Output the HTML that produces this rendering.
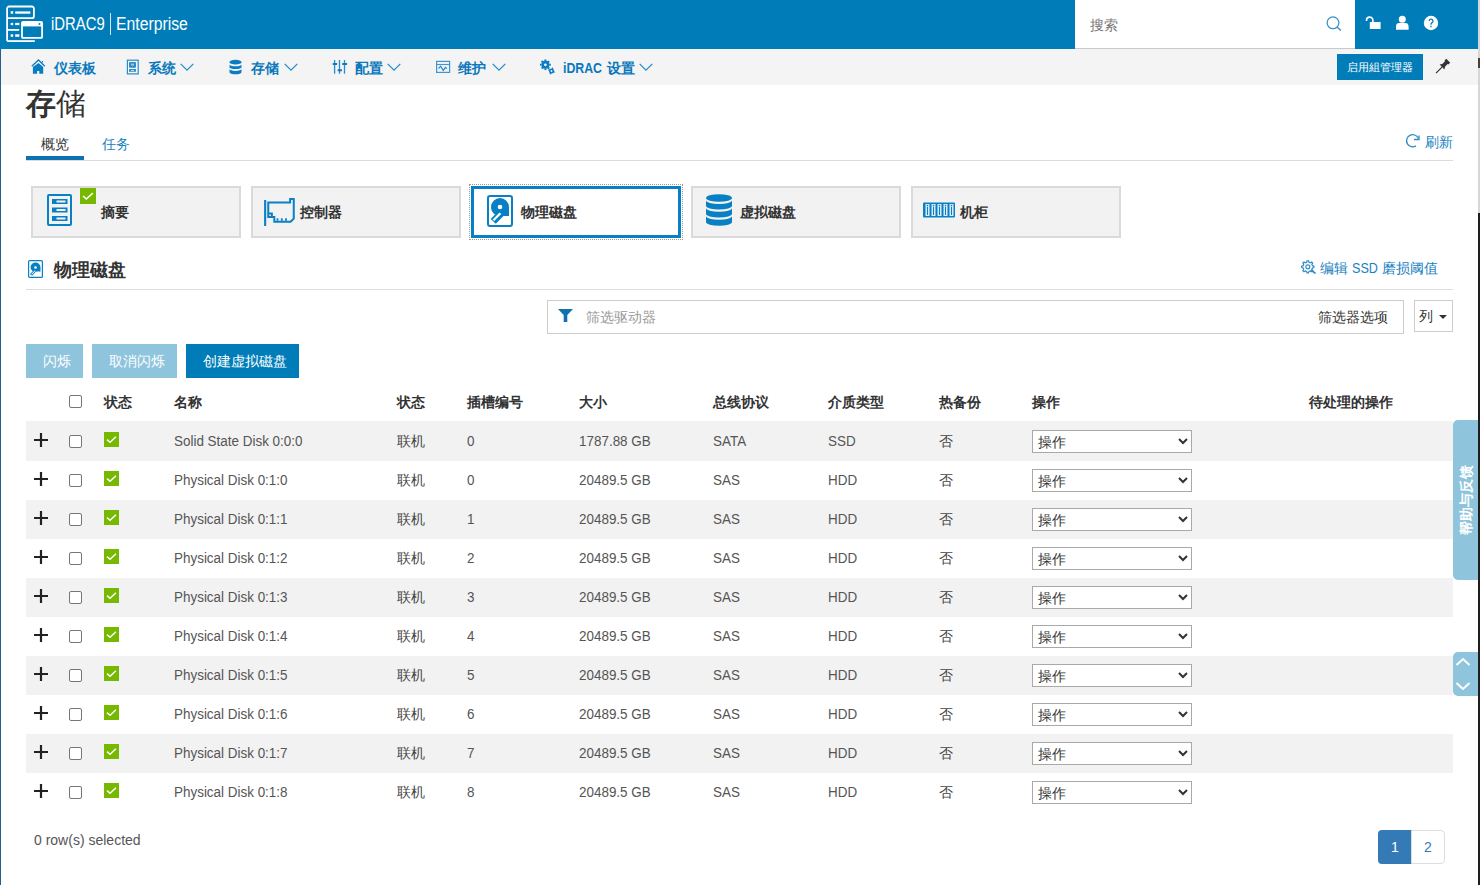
<!DOCTYPE html>
<html><head><meta charset="utf-8"><style>
*{box-sizing:border-box;margin:0;padding:0}
html,body{width:1480px;height:885px;overflow:hidden;background:#fff;font-family:"Liberation Sans",sans-serif;color:#333;position:relative}
.a{position:absolute;white-space:nowrap}
.nv{font-size:14px;font-weight:bold;color:#0b78bc;line-height:16px}
.tile{top:186px;width:210px;height:52px;background:#f2f2f2;border:2px solid #dadada}
.tt{font-size:14px;font-weight:bold;color:#333;line-height:16px}
.th{top:394px;font-size:14px;font-weight:bold;color:#333;line-height:16px}
.row{left:26px;width:1427px;height:39px}
.td{font-size:14px;color:#555;line-height:16px}
.sx{display:inline-block;transform-origin:0 0}
.cb{width:13px;height:13px;border:1px solid #767676;border-radius:2px;background:#fff}
.sel{width:160px;height:23px;border:1px solid #a9a9a9;background:#fff}
.btn{top:344px;height:34px;color:#fff;font-size:14px;line-height:34px;text-align:center;padding-left:4px}
</style></head><body>
<div class="a" style="left:0;top:0;width:1480px;height:49px;background:#007db8"></div>
<svg class="a" style="left:0;top:0" width="48" height="48" viewBox="0 0 48 48"><g fill="none" stroke="#fff" stroke-width="1.8">
<path d="M7.1 41.1 V8.5 a2 2 0 0 1 2 -2 H31.9 a2 2 0 0 1 2 2 V16.2 a2 2 0 0 1 -2 2 H7.1"/>
<path d="M7.1 29.9 H19.2"/><path d="M7.1 41.1 H34.8"/>
<rect x="22" y="22" width="20.1" height="15.9" rx="1"/></g>
<g fill="#fff"><rect x="10.7" y="11.2" width="2.5" height="2.5"/><rect x="15.2" y="11.4" width="15.1" height="2.3"/>
<rect x="10.7" y="22.9" width="2.5" height="2.2"/><rect x="15.2" y="22.9" width="4.2" height="2.2"/>
<rect x="10.7" y="34.3" width="2.5" height="2.5"/><rect x="15.2" y="34.3" width="4.2" height="2.5"/>
<rect x="22" y="22" width="20.1" height="4.4"/></g><circle cx="39.5" cy="23.9" r="1" fill="#007db8"/></svg>
<div class="a" style="left:51px;top:14px;font-size:17.5px;color:#fff;line-height:20px"><span class="sx" style="transform:scaleX(0.85)">iDRAC9</span></div>
<div class="a" style="left:110px;top:13px;width:1px;height:22px;background:#d8e9f3"></div>
<div class="a" style="left:116px;top:14px;font-size:17.5px;color:#fff;line-height:20px"><span class="sx" style="transform:scaleX(0.9)">Enterprise</span></div>
<div class="a" style="left:1075px;top:0;width:280px;height:48px;background:#fff"></div>
<div class="a" style="left:1075px;top:48px;width:280px;height:1px;background:#c9c9c9"></div>
<div class="a" style="left:1090px;top:17px;font-size:14px;color:#777;line-height:16px">搜索</div>
<svg class="a" style="left:1326px;top:16px" width="16" height="16" viewBox="0 0 16 16"><circle cx="7" cy="6.8" r="5.9" fill="none" stroke="#3a92c7" stroke-width="1.3"/><path d="M11.2 11 L14.8 14.6" stroke="#3a92c7" stroke-width="1.4"/></svg>
<svg class="a" style="left:1364px;top:15px" width="18" height="16" viewBox="0 0 18 16"><path d="M2.5 6 V5.3 a3.2 3.2 0 0 1 6.4 0 V7.5" fill="none" stroke="#fff" stroke-width="1.6"/><rect x="5.8" y="7" width="10.8" height="7" fill="#fff"/></svg>
<svg class="a" style="left:1395px;top:15px" width="14" height="16" viewBox="0 0 14 16"><circle cx="7.3" cy="4.3" r="3.5" fill="#fff"/><path d="M1 14.8 V11.5 a3.4 3.4 0 0 1 3.4 -3.4 h5.8 a3.4 3.4 0 0 1 3.4 3.4 V14.8 Z" fill="#fff"/></svg>
<svg class="a" style="left:1423px;top:15px" width="16" height="16" viewBox="0 0 16 16"><circle cx="8" cy="8" r="7.2" fill="#fff"/><path d="M6.2 6 a1.9 1.9 0 1 1 2.6 1.8 c-0.6 0.3 -0.8 0.7 -0.8 1.4 V9.8" fill="none" stroke="#007db8" stroke-width="1.3"/><rect x="7.3" y="10.8" width="1.4" height="1.4" fill="#007db8"/></svg>
<div class="a" style="left:0;top:49px;width:1478px;height:36px;background:#f4f4f4"></div>
<svg class="a" style="left:30px;top:58px" width="16" height="17" viewBox="0 0 16 17"><path d="M1.8 8.3 L8.5 2 L14.8 8.3" fill="none" stroke="#0a7cc1" stroke-width="1.3"/><path d="M12 3 H13 V5 L12 4Z" fill="#0a7cc1"/><path d="M2.9 9 L8.5 5 L13.2 9 V15.8 H9.3 V13 H7.1 V15.8 H2.9 Z" fill="#0a7cc1"/></svg>
<div class="a nv" style="left:54px;top:60px">仪表板</div>
<svg class="a" style="left:126px;top:59px" width="13" height="16" viewBox="0 0 13 16"><rect x="1.4" y="1.2" width="10.8" height="13.7" fill="none" stroke="#2a8ccb" stroke-width="1.2"/><rect x="3" y="3" width="7" height="5.7" rx="1" fill="#2a8ccb"/><rect x="5" y="4.6" width="3" height="2" fill="#9cc9e6"/><rect x="3" y="10.1" width="7" height="2.7" rx="0.5" fill="#2a8ccb"/><rect x="5" y="11" width="3" height="0.9" fill="#cfe5f3"/></svg>
<div class="a nv" style="left:148px;top:60px">系统</div>
<svg class="a" style="left:229px;top:59px" width="13" height="16" viewBox="0 0 13 16"><g fill="#0a7cc1"><path d="M0.5 2.8 a6 2 0 0 1 12 0 V3.6 a6 1.8 0 0 1 -12 0Z"/><path d="M0.5 5.5 a6 1.8 0 0 0 12 0 V8.2 a6 1.8 0 0 1 -12 0Z"/><path d="M0.5 10.1 a6 1.8 0 0 0 12 0 V13.3 a6 2 0 0 1 -12 0Z"/></g></svg>
<div class="a nv" style="left:251px;top:60px">存储</div>
<svg class="a" style="left:332px;top:59px" width="16" height="16" viewBox="0 0 16 16"><g stroke="#2a8ccb" stroke-width="1.3"><path d="M2.6 1 V14.7 M7.5 1 V14.7 M12.5 1 V14.7"/></g><g fill="#0a7cc1"><rect x="0.7" y="4" width="4.4" height="2" rx="0.5"/><rect x="5.6" y="10.2" width="4.4" height="2.1" rx="0.5"/><rect x="10.2" y="4" width="4.9" height="2" rx="0.5"/></g></svg>
<div class="a nv" style="left:355px;top:60px">配置</div>
<svg class="a" style="left:435px;top:60px" width="16" height="14" viewBox="0 0 16 14"><rect x="1.6" y="1.4" width="13" height="11" fill="none" stroke="#3b97d3" stroke-width="1.2"/><path d="M1.6 4.5 H14.6" stroke="#3b97d3" stroke-width="1.1"/><path d="M3.5 8.6 L5.6 6.2 L8.3 10.4 L10.4 7.3 L12 8.6" fill="none" stroke="#2a85c6" stroke-width="1.2"/></svg>
<div class="a nv" style="left:458px;top:60px">维护</div>
<svg class="a" style="left:539px;top:59px" width="17" height="16" viewBox="0 0 17 16"><g fill="#0a7cc1"><circle cx="6.4" cy="5.8" r="4"/><path d="M5.4 0.6 h2 v1.5 h-2Z M5.4 9.5 h2 v1.5 h-2Z M1 4.8 v2 h1.5 v-2Z M10.3 4.8 v2 h1.5 v-2Z" /><g transform="rotate(45 6.4 5.8)"><path d="M5.4 0.6 h2 v1.5 h-2Z M5.4 9.5 h2 v1.5 h-2Z M1 4.8 v2 h1.5 v-2Z M10.3 4.8 v2 h1.5 v-2Z"/></g><circle cx="12.5" cy="12" r="2.5"/><g transform="rotate(22 12.5 12)"><path d="M11.8 8.6 h1.4 v1.2 h-1.4Z M11.8 14.2 h1.4 v1.2 h-1.4Z M9.1 11.3 v1.4 h1.2 v-1.4Z M14.7 11.3 v1.4 h1.2 v-1.4Z"/></g></g><circle cx="6.4" cy="5.8" r="1.4" fill="#f3f3f3"/><circle cx="12.5" cy="12" r="0.9" fill="#f3f3f3"/></svg>
<div class="a nv" style="left:563px;top:60px"><span class="sx" style="transform:scaleX(0.88);width:44px">iDRAC</span>设置</div>
<svg class="a" style="left:180px;top:63px" width="14" height="9" viewBox="0 0 14 9"><path d="M0.7 0.9 L7 7.2 L13.3 0.9" fill="none" stroke="#2a8ccb" stroke-width="1.3"/></svg>
<svg class="a" style="left:284px;top:63px" width="14" height="9" viewBox="0 0 14 9"><path d="M0.7 0.9 L7 7.2 L13.3 0.9" fill="none" stroke="#2a8ccb" stroke-width="1.3"/></svg>
<svg class="a" style="left:387px;top:63px" width="14" height="9" viewBox="0 0 14 9"><path d="M0.7 0.9 L7 7.2 L13.3 0.9" fill="none" stroke="#2a8ccb" stroke-width="1.3"/></svg>
<svg class="a" style="left:492px;top:63px" width="14" height="9" viewBox="0 0 14 9"><path d="M0.7 0.9 L7 7.2 L13.3 0.9" fill="none" stroke="#2a8ccb" stroke-width="1.3"/></svg>
<svg class="a" style="left:639px;top:63px" width="14" height="9" viewBox="0 0 14 9"><path d="M0.7 0.9 L7 7.2 L13.3 0.9" fill="none" stroke="#2a8ccb" stroke-width="1.3"/></svg>
<div class="a" style="left:1337px;top:54px;width:86px;height:26px;background:#007db8;color:#fff;font-size:11px;line-height:26px;text-align:center">启用組管理器</div>
<svg class="a" style="left:1435px;top:58px" width="16" height="16" viewBox="0 0 16 16"><path d="M1 15.2 L7 9.2" stroke="#333" stroke-width="1.2"/><path d="M4.6 6.6 L9.4 11.4 L10 8.7 L12.6 6 L13.3 6.5 L15.2 4.7 L11.3 0.8 L9.5 2.6 L10 3.3 L7.3 6Z" fill="#333"/></svg>
<div class="a" style="left:26px;top:87px;font-size:29.5px;color:#333;line-height:33px"><span style="font-weight:bold">存</span>储</div>
<div class="a" style="left:41px;top:136px;font-size:14px;color:#333;line-height:16px">概览</div>
<div class="a" style="left:102px;top:136px;font-size:14px;color:#1a82c0;line-height:16px">任务</div>
<div class="a" style="left:26px;top:160px;width:1427px;height:1px;background:#dcdcdc"></div>
<div class="a" style="left:26px;top:156px;width:58px;height:4px;background:#0e72b0"></div>
<svg class="a" style="left:1405px;top:133px" width="16" height="16" viewBox="0 0 16 16"><path d="M13.2 5.2 A6.1 6.1 0 1 0 11 12.9" fill="none" stroke="#2f8bc6" stroke-width="1.3"/><path d="M9 6.5 H14 V2.4" fill="none" stroke="#2f8bc6" stroke-width="1.3"/></svg>
<div class="a" style="left:1425px;top:134px;font-size:14px;color:#1a82c0;line-height:16px">刷新</div>
<div class="a tile" style="left:31px"></div>
<div class="a tile" style="left:251px"></div>
<div class="a tile" style="left:691px"></div>
<div class="a tile" style="left:911px"></div>
<div class="a" style="left:469px;top:184px;width:214px;height:56px;border:1px dotted #9a9a9a"></div>
<div class="a" style="left:471px;top:186px;width:210px;height:52px;background:#fff;border:3px solid #0a80c4"></div>
<div class="a tt" style="left:101px;top:204px">摘要</div>
<div class="a tt" style="left:300px;top:204px">控制器</div>
<div class="a tt" style="left:521px;top:204px">物理磁盘</div>
<div class="a tt" style="left:740px;top:204px">虚拟磁盘</div>
<div class="a tt" style="left:960px;top:204px">机柜</div>
<svg class="a" style="left:47px;top:194px" width="25" height="32" viewBox="0 0 25 32"><rect x="1" y="1" width="23" height="30" rx="1" fill="none" stroke="#0a80c4" stroke-width="2"/><g fill="#0a80c4"><rect x="5" y="5" width="15.5" height="5"/><rect x="5" y="13.5" width="15.5" height="5"/><rect x="5" y="22" width="15.5" height="5"/></g><g fill="#f2f2f2"><rect x="9.5" y="6.5" width="9" height="2"/><rect x="9.5" y="15" width="9" height="2"/><rect x="9.5" y="23.5" width="9" height="2"/></g></svg>
<div class="a" style="left:80px;top:188px;width:16px;height:16px;background:#76b900"></div>
<svg class="a" style="left:80px;top:188px" width="16" height="16" viewBox="0 0 16 16"><path d="M3 8 L6.3 11 L12.8 5.2" fill="none" stroke="#fff" stroke-width="1.6"/></svg>
<svg class="a" style="left:264px;top:198px" width="32" height="28" viewBox="0 0 32 28"><rect x="0.1" y="2" width="2.1" height="26" fill="#0a80c4"/><path d="M4.25 19 V4.6 H26.1 V1 H29.75 V20.6 L26.6 23.75 H10.3 V19 H4.25 Z M4.25 15.4 H7.85 V19" fill="none" stroke="#0a80c4" stroke-width="2"/><g fill="#0a80c4"><rect x="12.6" y="20.3" width="1.8" height="2.5"/><rect x="16.9" y="20.3" width="1.8" height="2.5"/><rect x="21.1" y="20.3" width="1.8" height="2.5"/></g></svg>
<svg class="a" style="left:487px;top:195px" width="26" height="32" viewBox="0 0 26 32"><rect x="1" y="1" width="24" height="30" rx="2" fill="none" stroke="#0a80c4" stroke-width="2"/><path d="M13 3 A9 9 0 0 0 4 12 A9 9 0 0 0 8 19.5 L13 21 H22 V12 A9 9 0 0 0 13 3 Z" fill="#0a80c4"/><circle cx="13" cy="12" r="2.3" fill="#fff"/><path d="M12 15.5 L3.6 24 L8.8 28.8 L17 20.5 Z" fill="#0a80c4"/><path d="M12.6 17.6 L5.6 24.6 L7.2 26.1 L14.2 19.1 Z" fill="#fff"/></svg>
<svg class="a" style="left:706px;top:194px" width="26" height="32" viewBox="0 0 26 32"><g fill="#0a80c4"><ellipse cx="13" cy="4" rx="13" ry="3.8"/><path d="M0 6.2 A13 3.8 0 0 0 26 6.2 V11.8 A13 3.8 0 0 1 0 11.8 Z"/><path d="M0 14 A13 3.8 0 0 0 26 14 V19.8 A13 3.8 0 0 1 0 19.8 Z"/><path d="M0 22 A13 3.8 0 0 0 26 22 V28 A13 3.8 0 0 1 0 28 Z"/></g></svg>
<svg class="a" style="left:923px;top:202px" width="32" height="16" viewBox="0 0 32 16"><rect x="0" y="0.5" width="32" height="15" rx="1" fill="#0a80c4"/><rect x="2.5" y="2" width="4" height="12" fill="#d9ecf7"/><rect x="4.0" y="5" width="1" height="8" fill="#0a80c4"/><circle cx="4.5" cy="3.6" r="0.8" fill="#0a80c4"/><rect x="8.5" y="2" width="4" height="12" fill="#d9ecf7"/><rect x="10.0" y="5" width="1" height="8" fill="#0a80c4"/><circle cx="10.5" cy="3.6" r="0.8" fill="#0a80c4"/><rect x="14.5" y="2" width="4" height="12" fill="#d9ecf7"/><rect x="16.0" y="5" width="1" height="8" fill="#0a80c4"/><circle cx="16.5" cy="3.6" r="0.8" fill="#0a80c4"/><rect x="20.5" y="2" width="4" height="12" fill="#d9ecf7"/><rect x="22.0" y="5" width="1" height="8" fill="#0a80c4"/><circle cx="22.5" cy="3.6" r="0.8" fill="#0a80c4"/><rect x="26.5" y="2" width="4" height="12" fill="#d9ecf7"/><rect x="28.0" y="5" width="1" height="8" fill="#0a80c4"/><circle cx="28.5" cy="3.6" r="0.8" fill="#0a80c4"/></svg>
<svg class="a" style="left:28px;top:260px" width="15" height="18" viewBox="0 0 15 18"><rect x="0.6" y="0.6" width="13.8" height="16.8" rx="1" fill="none" stroke="#0a80c4" stroke-width="1.2"/><path d="M7.5 2.5 A5 5 0 0 0 2.5 7.5 A5 5 0 0 0 4.5 11 L7.5 11.5 H12.5 V7.5 A5 5 0 0 0 7.5 2.5Z" fill="#0a80c4"/><circle cx="7.5" cy="7.5" r="1.3" fill="#fff"/><path d="M6.5 9.5 L2 14 L4 15.8 L8.5 11.3Z" fill="#0a80c4"/><path d="M6.8 10.5 L3.3 14 L4 14.6 L7.5 11.1Z" fill="#fff"/></svg>
<div class="a" style="left:54px;top:261px;font-size:17.5px;font-weight:bold;color:#333;line-height:19px">物理磁盘</div>
<svg class="a" style="left:1301px;top:260px" width="15" height="14" viewBox="0 0 15 14"><g fill="none" stroke="#2f8bc6" stroke-width="1.2"><path d="M6 0.8 L7.6 0.8 L8 2.3 L9.3 2.9 L10.6 2 L11.7 3.1 L10.9 4.4 L11.4 5.7 L12.9 6.1 V7.6 L11.4 8 L10.9 9.3 L11.7 10.6 L10.6 11.7 L9.3 10.9 L8 11.4 L7.6 12.9 H6 L5.6 11.4 L4.3 10.9 L3 11.7 L1.9 10.6 L2.7 9.3 L2.2 8 L0.7 7.6 V6.1 L2.2 5.7 L2.7 4.4 L1.9 3.1 L3 2 L4.3 2.8 L5.6 2.3 Z"/><circle cx="6.8" cy="6.8" r="2"/></g><path d="M10 10 L14.5 13.5" stroke="#2f8bc6" stroke-width="1.6"/></svg>
<div class="a" style="left:1320px;top:260px;font-size:14px;color:#1a82c0;line-height:16px">编辑 <span class="sx" style="transform:scaleX(0.9);width:30.5px">SSD</span>磨损阈值</div>
<div class="a" style="left:26px;top:289px;width:1427px;height:1px;background:#dcdcdc"></div>
<div class="a" style="left:547px;top:300px;width:857px;height:34px;border:1px solid #ccc;background:#fff"></div>
<svg class="a" style="left:558px;top:309px" width="15" height="13" viewBox="0 0 15 13"><path d="M0 0 H15 L9.3 6 V13 H5.7 V6 Z" fill="#0e72b0"/></svg>
<div class="a" style="left:586px;top:309px;font-size:14px;color:#999;line-height:16px">筛选驱动器</div>
<div class="a" style="left:1318px;top:309px;font-size:14px;color:#333;line-height:16px">筛选器选项</div>
<div class="a" style="left:1414px;top:300px;width:39px;height:32px;border:1px solid #ccc;background:#fff"></div>
<div class="a" style="left:1419px;top:308px;font-size:14px;color:#333;line-height:16px">列</div>
<svg class="a" style="left:1439px;top:315px" width="8" height="4" viewBox="0 0 8 4"><path d="M0 0 H8 L4 4Z" fill="#333"/></svg>
<div class="a btn" style="left:26px;width:57px;background:#8fc4dd">闪烁</div>
<div class="a btn" style="left:92px;width:85px;background:#8fc4dd">取消闪烁</div>
<div class="a btn" style="left:186px;width:113px;background:#007db8">创建虚拟磁盘</div>
<div class="a cb" style="left:69px;top:395px"></div>
<div class="a th" style="left:104px">状态</div>
<div class="a th" style="left:174px">名称</div>
<div class="a th" style="left:397px">状态</div>
<div class="a th" style="left:467px">插槽编号</div>
<div class="a th" style="left:579px">大小</div>
<div class="a th" style="left:713px">总线协议</div>
<div class="a th" style="left:828px">介质类型</div>
<div class="a th" style="left:939px">热备份</div>
<div class="a th" style="left:1032px">操作</div>
<div class="a th" style="left:1309px">待处理的操作</div>
<div class="a row" style="top:421px;height:40px;background:#f2f2f2"></div>
<svg class="a" style="left:34px;top:433px" width="14" height="14" viewBox="0 0 14 14"><path d="M7 0 V14 M0 7 H14" stroke="#222" stroke-width="2.2"/></svg>
<div class="a cb" style="left:69px;top:435px"></div>
<div class="a" style="left:104px;top:432px;width:15px;height:15px;background:#76b900"></div>
<svg class="a" style="left:104px;top:432px" width="15" height="15" viewBox="0 0 15 15"><path d="M3 7.6 L6 10.2 L12 4.8" fill="none" stroke="#fff" stroke-width="1.5"/></svg>
<div class="a td" style="left:174px;top:433px"><span class="sx" style="transform:scaleX(0.96)">Solid State Disk 0:0:0</span></div>
<div class="a td" style="left:397px;top:433px;color:#444">联机</div>
<div class="a td" style="left:467px;top:433px"><span class="sx" style="transform:scaleX(0.96)">0</span></div>
<div class="a td" style="left:579px;top:433px"><span class="sx" style="transform:scaleX(0.96)">1787.88 GB</span></div>
<div class="a td" style="left:713px;top:433px"><span class="sx" style="transform:scaleX(0.96)">SATA</span></div>
<div class="a td" style="left:828px;top:433px"><span class="sx" style="transform:scaleX(0.96)">SSD</span></div>
<div class="a td" style="left:939px;top:433px;color:#444">否</div>
<div class="a sel" style="left:1032px;top:430px"></div>
<div class="a td" style="left:1038px;top:434px;color:#333">操作</div>
<svg class="a" style="left:1178px;top:438px" width="10" height="7" viewBox="0 0 10 7"><path d="M1 1 L5 5 L9 1" fill="none" stroke="#333" stroke-width="2"/></svg>
<div class="a row" style="top:461px;height:39px;background:#fff"></div>
<svg class="a" style="left:34px;top:472px" width="14" height="14" viewBox="0 0 14 14"><path d="M7 0 V14 M0 7 H14" stroke="#222" stroke-width="2.2"/></svg>
<div class="a cb" style="left:69px;top:474px"></div>
<div class="a" style="left:104px;top:471px;width:15px;height:15px;background:#76b900"></div>
<svg class="a" style="left:104px;top:471px" width="15" height="15" viewBox="0 0 15 15"><path d="M3 7.6 L6 10.2 L12 4.8" fill="none" stroke="#fff" stroke-width="1.5"/></svg>
<div class="a td" style="left:174px;top:472px"><span class="sx" style="transform:scaleX(0.96)">Physical Disk 0:1:0</span></div>
<div class="a td" style="left:397px;top:472px;color:#444">联机</div>
<div class="a td" style="left:467px;top:472px"><span class="sx" style="transform:scaleX(0.96)">0</span></div>
<div class="a td" style="left:579px;top:472px"><span class="sx" style="transform:scaleX(0.96)">20489.5 GB</span></div>
<div class="a td" style="left:713px;top:472px"><span class="sx" style="transform:scaleX(0.96)">SAS</span></div>
<div class="a td" style="left:828px;top:472px"><span class="sx" style="transform:scaleX(0.96)">HDD</span></div>
<div class="a td" style="left:939px;top:472px;color:#444">否</div>
<div class="a sel" style="left:1032px;top:469px"></div>
<div class="a td" style="left:1038px;top:473px;color:#333">操作</div>
<svg class="a" style="left:1178px;top:477px" width="10" height="7" viewBox="0 0 10 7"><path d="M1 1 L5 5 L9 1" fill="none" stroke="#333" stroke-width="2"/></svg>
<div class="a row" style="top:500px;height:39px;background:#f2f2f2"></div>
<svg class="a" style="left:34px;top:511px" width="14" height="14" viewBox="0 0 14 14"><path d="M7 0 V14 M0 7 H14" stroke="#222" stroke-width="2.2"/></svg>
<div class="a cb" style="left:69px;top:513px"></div>
<div class="a" style="left:104px;top:510px;width:15px;height:15px;background:#76b900"></div>
<svg class="a" style="left:104px;top:510px" width="15" height="15" viewBox="0 0 15 15"><path d="M3 7.6 L6 10.2 L12 4.8" fill="none" stroke="#fff" stroke-width="1.5"/></svg>
<div class="a td" style="left:174px;top:511px"><span class="sx" style="transform:scaleX(0.96)">Physical Disk 0:1:1</span></div>
<div class="a td" style="left:397px;top:511px;color:#444">联机</div>
<div class="a td" style="left:467px;top:511px"><span class="sx" style="transform:scaleX(0.96)">1</span></div>
<div class="a td" style="left:579px;top:511px"><span class="sx" style="transform:scaleX(0.96)">20489.5 GB</span></div>
<div class="a td" style="left:713px;top:511px"><span class="sx" style="transform:scaleX(0.96)">SAS</span></div>
<div class="a td" style="left:828px;top:511px"><span class="sx" style="transform:scaleX(0.96)">HDD</span></div>
<div class="a td" style="left:939px;top:511px;color:#444">否</div>
<div class="a sel" style="left:1032px;top:508px"></div>
<div class="a td" style="left:1038px;top:512px;color:#333">操作</div>
<svg class="a" style="left:1178px;top:516px" width="10" height="7" viewBox="0 0 10 7"><path d="M1 1 L5 5 L9 1" fill="none" stroke="#333" stroke-width="2"/></svg>
<div class="a row" style="top:539px;height:39px;background:#fff"></div>
<svg class="a" style="left:34px;top:550px" width="14" height="14" viewBox="0 0 14 14"><path d="M7 0 V14 M0 7 H14" stroke="#222" stroke-width="2.2"/></svg>
<div class="a cb" style="left:69px;top:552px"></div>
<div class="a" style="left:104px;top:549px;width:15px;height:15px;background:#76b900"></div>
<svg class="a" style="left:104px;top:549px" width="15" height="15" viewBox="0 0 15 15"><path d="M3 7.6 L6 10.2 L12 4.8" fill="none" stroke="#fff" stroke-width="1.5"/></svg>
<div class="a td" style="left:174px;top:550px"><span class="sx" style="transform:scaleX(0.96)">Physical Disk 0:1:2</span></div>
<div class="a td" style="left:397px;top:550px;color:#444">联机</div>
<div class="a td" style="left:467px;top:550px"><span class="sx" style="transform:scaleX(0.96)">2</span></div>
<div class="a td" style="left:579px;top:550px"><span class="sx" style="transform:scaleX(0.96)">20489.5 GB</span></div>
<div class="a td" style="left:713px;top:550px"><span class="sx" style="transform:scaleX(0.96)">SAS</span></div>
<div class="a td" style="left:828px;top:550px"><span class="sx" style="transform:scaleX(0.96)">HDD</span></div>
<div class="a td" style="left:939px;top:550px;color:#444">否</div>
<div class="a sel" style="left:1032px;top:547px"></div>
<div class="a td" style="left:1038px;top:551px;color:#333">操作</div>
<svg class="a" style="left:1178px;top:555px" width="10" height="7" viewBox="0 0 10 7"><path d="M1 1 L5 5 L9 1" fill="none" stroke="#333" stroke-width="2"/></svg>
<div class="a row" style="top:578px;height:39px;background:#f2f2f2"></div>
<svg class="a" style="left:34px;top:589px" width="14" height="14" viewBox="0 0 14 14"><path d="M7 0 V14 M0 7 H14" stroke="#222" stroke-width="2.2"/></svg>
<div class="a cb" style="left:69px;top:591px"></div>
<div class="a" style="left:104px;top:588px;width:15px;height:15px;background:#76b900"></div>
<svg class="a" style="left:104px;top:588px" width="15" height="15" viewBox="0 0 15 15"><path d="M3 7.6 L6 10.2 L12 4.8" fill="none" stroke="#fff" stroke-width="1.5"/></svg>
<div class="a td" style="left:174px;top:589px"><span class="sx" style="transform:scaleX(0.96)">Physical Disk 0:1:3</span></div>
<div class="a td" style="left:397px;top:589px;color:#444">联机</div>
<div class="a td" style="left:467px;top:589px"><span class="sx" style="transform:scaleX(0.96)">3</span></div>
<div class="a td" style="left:579px;top:589px"><span class="sx" style="transform:scaleX(0.96)">20489.5 GB</span></div>
<div class="a td" style="left:713px;top:589px"><span class="sx" style="transform:scaleX(0.96)">SAS</span></div>
<div class="a td" style="left:828px;top:589px"><span class="sx" style="transform:scaleX(0.96)">HDD</span></div>
<div class="a td" style="left:939px;top:589px;color:#444">否</div>
<div class="a sel" style="left:1032px;top:586px"></div>
<div class="a td" style="left:1038px;top:590px;color:#333">操作</div>
<svg class="a" style="left:1178px;top:594px" width="10" height="7" viewBox="0 0 10 7"><path d="M1 1 L5 5 L9 1" fill="none" stroke="#333" stroke-width="2"/></svg>
<div class="a row" style="top:617px;height:39px;background:#fff"></div>
<svg class="a" style="left:34px;top:628px" width="14" height="14" viewBox="0 0 14 14"><path d="M7 0 V14 M0 7 H14" stroke="#222" stroke-width="2.2"/></svg>
<div class="a cb" style="left:69px;top:630px"></div>
<div class="a" style="left:104px;top:627px;width:15px;height:15px;background:#76b900"></div>
<svg class="a" style="left:104px;top:627px" width="15" height="15" viewBox="0 0 15 15"><path d="M3 7.6 L6 10.2 L12 4.8" fill="none" stroke="#fff" stroke-width="1.5"/></svg>
<div class="a td" style="left:174px;top:628px"><span class="sx" style="transform:scaleX(0.96)">Physical Disk 0:1:4</span></div>
<div class="a td" style="left:397px;top:628px;color:#444">联机</div>
<div class="a td" style="left:467px;top:628px"><span class="sx" style="transform:scaleX(0.96)">4</span></div>
<div class="a td" style="left:579px;top:628px"><span class="sx" style="transform:scaleX(0.96)">20489.5 GB</span></div>
<div class="a td" style="left:713px;top:628px"><span class="sx" style="transform:scaleX(0.96)">SAS</span></div>
<div class="a td" style="left:828px;top:628px"><span class="sx" style="transform:scaleX(0.96)">HDD</span></div>
<div class="a td" style="left:939px;top:628px;color:#444">否</div>
<div class="a sel" style="left:1032px;top:625px"></div>
<div class="a td" style="left:1038px;top:629px;color:#333">操作</div>
<svg class="a" style="left:1178px;top:633px" width="10" height="7" viewBox="0 0 10 7"><path d="M1 1 L5 5 L9 1" fill="none" stroke="#333" stroke-width="2"/></svg>
<div class="a row" style="top:656px;height:39px;background:#f2f2f2"></div>
<svg class="a" style="left:34px;top:667px" width="14" height="14" viewBox="0 0 14 14"><path d="M7 0 V14 M0 7 H14" stroke="#222" stroke-width="2.2"/></svg>
<div class="a cb" style="left:69px;top:669px"></div>
<div class="a" style="left:104px;top:666px;width:15px;height:15px;background:#76b900"></div>
<svg class="a" style="left:104px;top:666px" width="15" height="15" viewBox="0 0 15 15"><path d="M3 7.6 L6 10.2 L12 4.8" fill="none" stroke="#fff" stroke-width="1.5"/></svg>
<div class="a td" style="left:174px;top:667px"><span class="sx" style="transform:scaleX(0.96)">Physical Disk 0:1:5</span></div>
<div class="a td" style="left:397px;top:667px;color:#444">联机</div>
<div class="a td" style="left:467px;top:667px"><span class="sx" style="transform:scaleX(0.96)">5</span></div>
<div class="a td" style="left:579px;top:667px"><span class="sx" style="transform:scaleX(0.96)">20489.5 GB</span></div>
<div class="a td" style="left:713px;top:667px"><span class="sx" style="transform:scaleX(0.96)">SAS</span></div>
<div class="a td" style="left:828px;top:667px"><span class="sx" style="transform:scaleX(0.96)">HDD</span></div>
<div class="a td" style="left:939px;top:667px;color:#444">否</div>
<div class="a sel" style="left:1032px;top:664px"></div>
<div class="a td" style="left:1038px;top:668px;color:#333">操作</div>
<svg class="a" style="left:1178px;top:672px" width="10" height="7" viewBox="0 0 10 7"><path d="M1 1 L5 5 L9 1" fill="none" stroke="#333" stroke-width="2"/></svg>
<div class="a row" style="top:695px;height:39px;background:#fff"></div>
<svg class="a" style="left:34px;top:706px" width="14" height="14" viewBox="0 0 14 14"><path d="M7 0 V14 M0 7 H14" stroke="#222" stroke-width="2.2"/></svg>
<div class="a cb" style="left:69px;top:708px"></div>
<div class="a" style="left:104px;top:705px;width:15px;height:15px;background:#76b900"></div>
<svg class="a" style="left:104px;top:705px" width="15" height="15" viewBox="0 0 15 15"><path d="M3 7.6 L6 10.2 L12 4.8" fill="none" stroke="#fff" stroke-width="1.5"/></svg>
<div class="a td" style="left:174px;top:706px"><span class="sx" style="transform:scaleX(0.96)">Physical Disk 0:1:6</span></div>
<div class="a td" style="left:397px;top:706px;color:#444">联机</div>
<div class="a td" style="left:467px;top:706px"><span class="sx" style="transform:scaleX(0.96)">6</span></div>
<div class="a td" style="left:579px;top:706px"><span class="sx" style="transform:scaleX(0.96)">20489.5 GB</span></div>
<div class="a td" style="left:713px;top:706px"><span class="sx" style="transform:scaleX(0.96)">SAS</span></div>
<div class="a td" style="left:828px;top:706px"><span class="sx" style="transform:scaleX(0.96)">HDD</span></div>
<div class="a td" style="left:939px;top:706px;color:#444">否</div>
<div class="a sel" style="left:1032px;top:703px"></div>
<div class="a td" style="left:1038px;top:707px;color:#333">操作</div>
<svg class="a" style="left:1178px;top:711px" width="10" height="7" viewBox="0 0 10 7"><path d="M1 1 L5 5 L9 1" fill="none" stroke="#333" stroke-width="2"/></svg>
<div class="a row" style="top:734px;height:39px;background:#f2f2f2"></div>
<svg class="a" style="left:34px;top:745px" width="14" height="14" viewBox="0 0 14 14"><path d="M7 0 V14 M0 7 H14" stroke="#222" stroke-width="2.2"/></svg>
<div class="a cb" style="left:69px;top:747px"></div>
<div class="a" style="left:104px;top:744px;width:15px;height:15px;background:#76b900"></div>
<svg class="a" style="left:104px;top:744px" width="15" height="15" viewBox="0 0 15 15"><path d="M3 7.6 L6 10.2 L12 4.8" fill="none" stroke="#fff" stroke-width="1.5"/></svg>
<div class="a td" style="left:174px;top:745px"><span class="sx" style="transform:scaleX(0.96)">Physical Disk 0:1:7</span></div>
<div class="a td" style="left:397px;top:745px;color:#444">联机</div>
<div class="a td" style="left:467px;top:745px"><span class="sx" style="transform:scaleX(0.96)">7</span></div>
<div class="a td" style="left:579px;top:745px"><span class="sx" style="transform:scaleX(0.96)">20489.5 GB</span></div>
<div class="a td" style="left:713px;top:745px"><span class="sx" style="transform:scaleX(0.96)">SAS</span></div>
<div class="a td" style="left:828px;top:745px"><span class="sx" style="transform:scaleX(0.96)">HDD</span></div>
<div class="a td" style="left:939px;top:745px;color:#444">否</div>
<div class="a sel" style="left:1032px;top:742px"></div>
<div class="a td" style="left:1038px;top:746px;color:#333">操作</div>
<svg class="a" style="left:1178px;top:750px" width="10" height="7" viewBox="0 0 10 7"><path d="M1 1 L5 5 L9 1" fill="none" stroke="#333" stroke-width="2"/></svg>
<div class="a row" style="top:773px;height:39px;background:#fff"></div>
<svg class="a" style="left:34px;top:784px" width="14" height="14" viewBox="0 0 14 14"><path d="M7 0 V14 M0 7 H14" stroke="#222" stroke-width="2.2"/></svg>
<div class="a cb" style="left:69px;top:786px"></div>
<div class="a" style="left:104px;top:783px;width:15px;height:15px;background:#76b900"></div>
<svg class="a" style="left:104px;top:783px" width="15" height="15" viewBox="0 0 15 15"><path d="M3 7.6 L6 10.2 L12 4.8" fill="none" stroke="#fff" stroke-width="1.5"/></svg>
<div class="a td" style="left:174px;top:784px"><span class="sx" style="transform:scaleX(0.96)">Physical Disk 0:1:8</span></div>
<div class="a td" style="left:397px;top:784px;color:#444">联机</div>
<div class="a td" style="left:467px;top:784px"><span class="sx" style="transform:scaleX(0.96)">8</span></div>
<div class="a td" style="left:579px;top:784px"><span class="sx" style="transform:scaleX(0.96)">20489.5 GB</span></div>
<div class="a td" style="left:713px;top:784px"><span class="sx" style="transform:scaleX(0.96)">SAS</span></div>
<div class="a td" style="left:828px;top:784px"><span class="sx" style="transform:scaleX(0.96)">HDD</span></div>
<div class="a td" style="left:939px;top:784px;color:#444">否</div>
<div class="a sel" style="left:1032px;top:781px"></div>
<div class="a td" style="left:1038px;top:785px;color:#333">操作</div>
<svg class="a" style="left:1178px;top:789px" width="10" height="7" viewBox="0 0 10 7"><path d="M1 1 L5 5 L9 1" fill="none" stroke="#333" stroke-width="2"/></svg>
<div class="a" style="left:34px;top:832px;font-size:14px;color:#555;line-height:16px">0 row(s) selected</div>
<div class="a" style="left:1378px;top:830px;width:34px;height:34px;background:#337ab7;border-radius:4px 0 0 4px;color:#fff;font-size:14px;line-height:34px;text-align:center">1</div>
<div class="a" style="left:1411px;top:830px;width:34px;height:34px;border:1px solid #ddd;border-radius:0 4px 4px 0;color:#337ab7;font-size:14px;line-height:32px;text-align:center;background:#fff">2</div>
<div class="a" style="left:1453px;top:420px;width:27px;height:160px;background:#8fc4dd;border-radius:5px 0 0 5px"></div>
<div class="a" style="left:1466px;top:500px;font-size:14px;font-weight:bold;color:#fff;line-height:16px;transform:translate(-50%,-50%) rotate(-90deg)">帮助与反馈</div>
<div class="a" style="left:1453px;top:652px;width:27px;height:44px;background:#8fc4dd;border-radius:5px 0 0 5px"></div>
<svg class="a" style="left:1455px;top:656px" width="16" height="36" viewBox="0 0 16 36"><path d="M1.5 9 L8 3 L14.5 9 M1.5 27 L8 33 L14.5 27" fill="none" stroke="#fff" stroke-width="2"/></svg>
<div class="a" style="left:1478px;top:0;width:2px;height:213px;background:#d6d6d6"></div>
<div class="a" style="left:1478px;top:58px;width:2px;height:10px;background:#4a4038"></div>
<div class="a" style="left:1478px;top:213px;width:2px;height:672px;background:#1e1e1e"></div>
<div class="a" style="left:0;top:49px;width:1px;height:836px;background:#2a5d8c"></div>
</body></html>
